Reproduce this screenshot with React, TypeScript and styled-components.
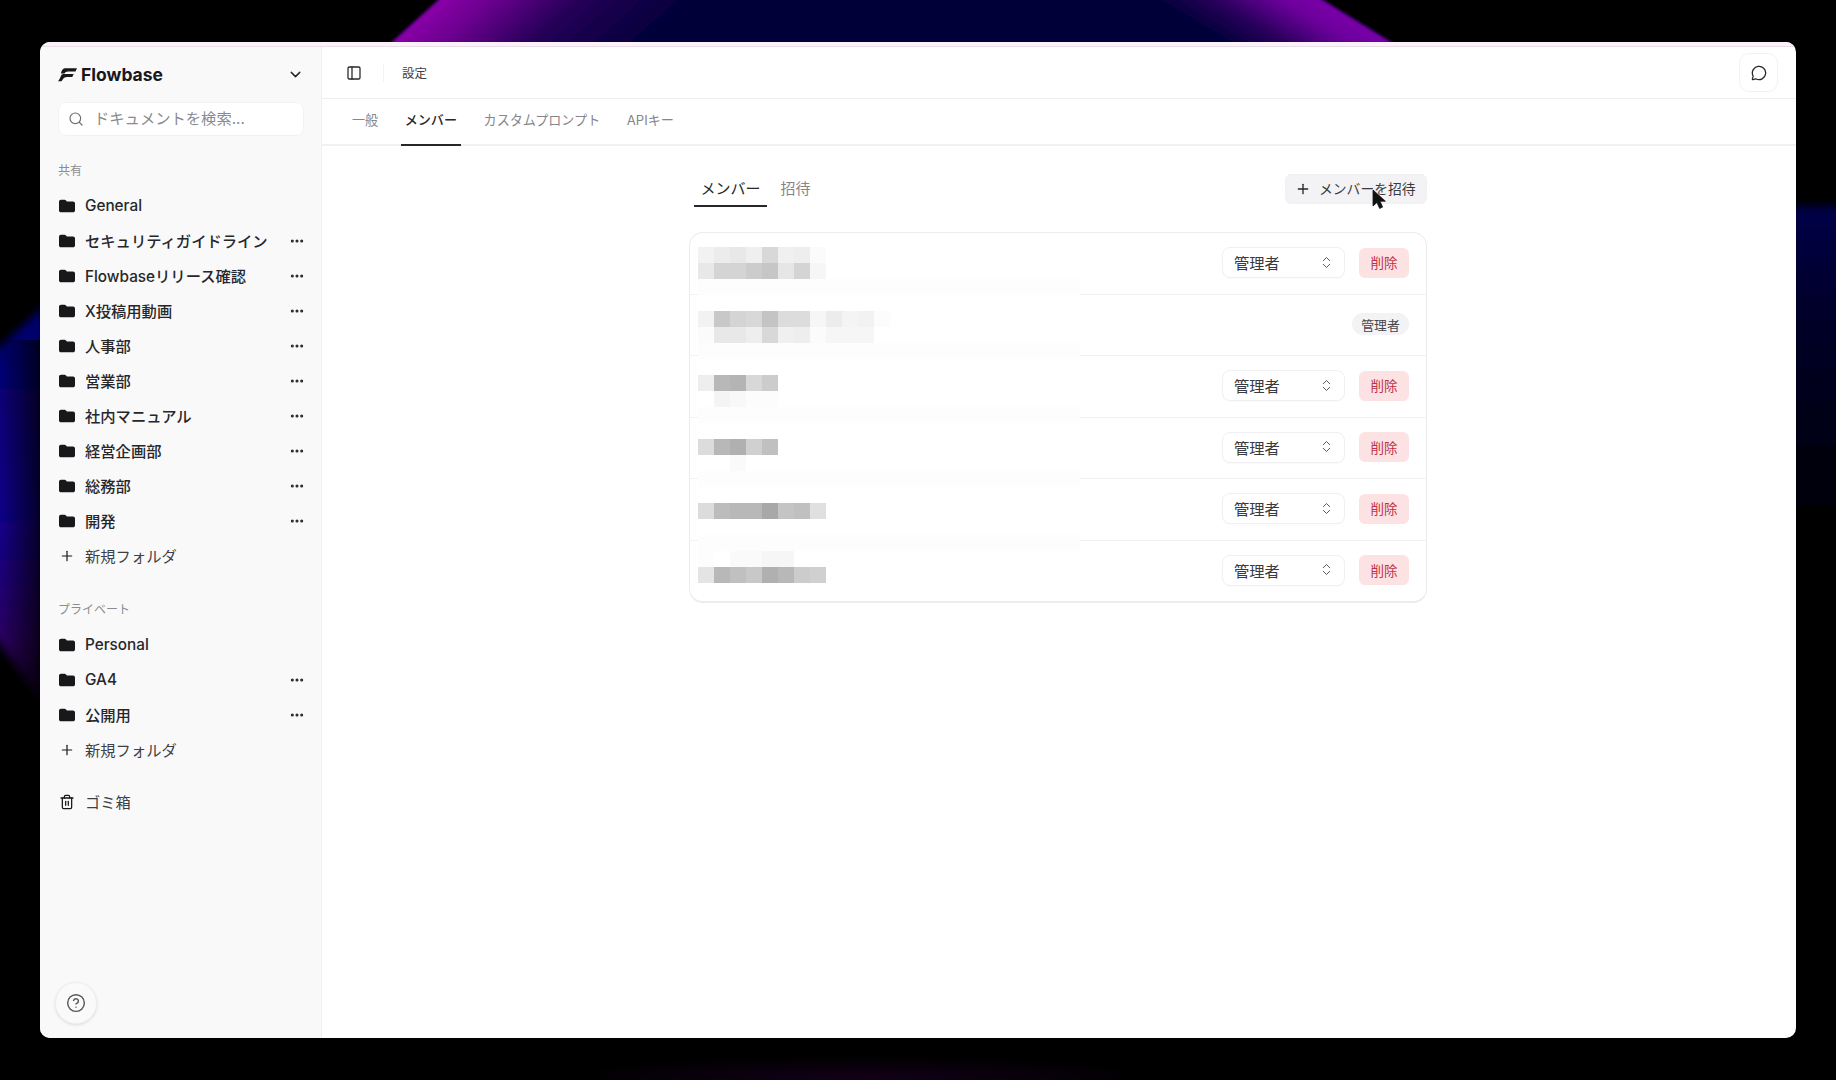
import React from "react";
import styled, { createGlobalStyle } from "styled-components";
import {
  ChevronDown,
  ChevronsUpDown,
  CircleHelp,
  Ellipsis,
  MessageCircle,
  PanelLeft,
  Plus,
  Search,
  Trash2,
} from "lucide-react";

const Global = createGlobalStyle`
  html, body { margin: 0; padding: 0; background: #000; }
  body {
    font-family: Inter, "Noto Sans CJK JP", "Noto Sans", sans-serif;
    color: #27272a;
  }
  * { box-sizing: border-box; }
`;

const Desktop = styled.div`
  position: relative;
  width: 1836px;
  height: 1080px;
  padding: 42px 40px;
  overflow: hidden;
  background: #000;
`;

const Wallpaper = styled.svg`
  position: absolute;
  inset: 0;
`;

const AppWindow = styled.div`
  position: relative;
  height: 996px;
  display: flex;
  flex-direction: column;
  border-radius: 10px;
  overflow: hidden;
  background: #fff;
`;

const TitleStrip = styled.div`
  height: 5px;
  flex: none;
  background: #fbf2f8;
  border-bottom: 1px solid #e9dee7;
`;

const Panes = styled.div`
  flex: 1;
  display: flex;
  min-height: 0;
`;

const Sidebar = styled.aside`
  width: 282px;
  flex: none;
  display: flex;
  flex-direction: column;
  padding: 0 17px 0 18px;
  background: #f9f9fa;
  border-right: 1px solid #f0f0f2;
`;

const Brand = styled.div`
  height: 55px;
  flex: none;
  display: flex;
  align-items: center;
  justify-content: space-between;
`;

const BrandMark = styled.div`
  display: flex;
  align-items: center;
  gap: 4px;
  font-size: 17.5px;
  font-weight: 700;
  color: #18181b;
`;

const SearchBox = styled.div`
  height: 34px;
  flex: none;
  display: flex;
  align-items: center;
  gap: 10px;
  padding: 0 0 4px 9px;
  background: #fff;
  border: 1px solid #f2f2f4;
  border-radius: 8px;
  font-size: 15.3px;
  color: #8a8a8e;
`;

const SearchGlyph = styled.span`
  display: flex;
  margin-top: 4px;
  color: #6f6f74;
`;

const SectionLabel = styled.div<{ $top: number }>`
  margin-top: ${(p) => p.$top}px;
  height: 16px;
  line-height: 16px;
  font-size: 12px;
  color: #8c8c90;
`;

const NavList = styled.div`
  margin-top: 9px;
  display: flex;
  flex-direction: column;
`;

const NavItem = styled.div<{ $muted?: boolean }>`
  height: 35px;
  display: flex;
  align-items: center;
  gap: 9px;
  font-size: 15.3px;
  font-weight: ${(p) => (p.$muted ? 400 : 500)};
  color: ${(p) => (p.$muted ? "#3f3f46" : "#27272a")};
`;

const NavIcon = styled.span`
  width: 18px;
  flex: none;
  display: flex;
  justify-content: center;
  color: #18181b;
`;

const NavText = styled.span<{ $latin?: boolean }>`
  flex: 1;
  white-space: nowrap;
  padding-bottom: ${(p) => (p.$latin ? 0 : 2)}px;
`;

const MoreButton = styled.span`
  display: flex;
  margin-right: -1px;
  color: #27272a;
`;

const TrashRow = styled(NavItem)`
  margin-top: 17px;
`;

const HelpButton = styled.button`
  margin: auto 0 14px -3px;
  width: 42px;
  height: 42px;
  padding: 0;
  display: flex;
  align-items: center;
  justify-content: center;
  flex: none;
  border-radius: 50%;
  border: 1px solid #f0f0f2;
  background: #fafafa;
  color: #55555a;
  box-shadow: 0 1px 3px rgba(0, 0, 0, 0.12);
`;

const Main = styled.main`
  flex: 1;
  min-width: 0;
  display: flex;
  flex-direction: column;
`;

const TopBar = styled.header`
  height: 52px;
  flex: none;
  display: flex;
  align-items: center;
  padding: 0 18px 0 24px;
  border-bottom: 1px solid #efeff1;
`;

const BarDivider = styled.span`
  width: 1px;
  height: 18px;
  margin: 0 18px 0 21px;
  background: #f3f3f5;
`;

const PageTitle = styled.span`
  flex: 1;
  font-size: 12.5px;
  color: #3f3f46;
`;

const ChatButton = styled.button`
  width: 39px;
  height: 39px;
  padding: 0;
  display: flex;
  align-items: center;
  justify-content: center;
  background: #fff;
  border: 1px solid #f2f2f4;
  border-radius: 10px;
  color: #27272a;
`;

const TabBar = styled.nav`
  height: 47px;
  flex: none;
  display: flex;
  gap: 18.5px;
  padding-left: 26px;
  border-bottom: 2px solid #f1f1f3;
`;

const Tab = styled.div<{ $active?: boolean }>`
  height: 47px;
  padding: 0 4px 5px;
  display: flex;
  align-items: center;
  font-size: 13.1px;
  font-weight: ${(p) => (p.$active ? 500 : 400)};
  color: ${(p) => (p.$active ? "#27272a" : "#85858a")};
  border-bottom: 2px solid ${(p) => (p.$active ? "#27272a" : "transparent")};
`;

const Content = styled.section`
  width: 738px;
  margin-left: 367px;
  padding-top: 28px;
`;

const MemberBar = styled.div`
  height: 33px;
  display: flex;
  align-items: flex-start;
  justify-content: space-between;
`;

const SubTabs = styled.div`
  display: flex;
  gap: 7px;
  padding-left: 5px;
`;

const SubTab = styled.div<{ $active?: boolean }>`
  height: 33px;
  padding: 0 6.5px 4px;
  display: flex;
  align-items: center;
  font-size: 15px;
  color: ${(p) => (p.$active ? "#27272a" : "#85858a")};
  border-bottom: 2px solid ${(p) => (p.$active ? "#27272a" : "transparent")};
`;

const InviteButton = styled.button`
  position: relative;
  width: 142px;
  height: 30px;
  padding: 0 0 3px 9px;
  display: flex;
  align-items: center;
  gap: 8px;
  background: #f3f3f5;
  border: 1px solid #f0f0f2;
  border-radius: 6px;
  font: inherit;
  font-size: 13.8px;
  color: #3a3a40;
`;

const PlusGlyph = styled.span`
  display: flex;
  margin-top: 3px;
  color: #27272a;
`;

const Cursor = styled.svg`
  position: absolute;
  left: 86px;
  top: 14px;
`;

const MemberCard = styled.div`
  position: relative;
  height: 371px;
  margin-top: 25px;
  display: flex;
  flex-direction: column;
  border: 1px solid #ececef;
  border-bottom-width: 2px;
  border-radius: 14px;
  background: #fff;
`;

const MemberRow = styled.div`
  flex: 1;
  display: flex;
  align-items: center;
  justify-content: flex-end;
  gap: 14px;
  padding: 0 17px 1px 0;
  border-bottom: 1px solid #f1f1f3;
  &:last-of-type { border-bottom: 0; }
`;

const RoleSelect = styled.div`
  width: 123px;
  height: 31px;
  padding: 0 10px 1px 11px;
  display: flex;
  align-items: center;
  justify-content: space-between;
  background: #fff;
  border: 1px solid #f0f0f2;
  border-radius: 8px;
  box-shadow: 0 1px 1px rgba(0, 0, 0, 0.02);
  font-size: 15.3px;
  color: #3a3a40;
`;

const DeleteButton = styled.div`
  width: 50px;
  height: 30px;
  padding-bottom: 1px;
  display: flex;
  align-items: center;
  justify-content: center;
  background: #fde2e4;
  border-radius: 6px;
  font-size: 13.5px;
  color: #bf3049;
`;

const RoleBadge = styled.div`
  width: 57px;
  height: 22px;
  display: flex;
  align-items: center;
  justify-content: center;
  background: #f3f3f5;
  border-radius: 11px;
  font-size: 12.8px;
  color: #44444a;
`;

const Mosaic = styled.svg`
  position: absolute;
  left: 8px;
  top: 14px;
  pointer-events: none;
`;

const FolderIcon = () => (
  <svg width="16" height="14" viewBox="0 0 16 14">
    <path
      d="M2 .8h3.600c.6 0 1 .2 1.400.7l.9 1.100h6.100c1.100 0 2 .9 2 2v6.800c0 1.100-.9 1.900-2 1.900H2c-1.100 0-2-.8-2-1.900V2.700C0 1.600.9.800 2 .800z"
      fill="#18181b"
    />
  </svg>
);

const Logo = () => (
  <svg width="19" height="14" viewBox="0 0 20 14">
    <path d="M7 0H20l-1.600 3.400H10.500C8.900 3.400 7.800 4.200 6.800 5.300H3C4 2.400 5 0 7 0z" fill="#18181b" />
    <path d="M5.500 6H16.500l-1.500 3H9.500C7.800 9 6.500 9.800 5.500 11C4.700 12 4.200 13 3.600 13.600H0C1 12.400 1.800 10.800 2.600 9C3.400 7.400 4 6 5.500 6z" fill="#18181b" />
  </svg>
);

const sharedFolders = [
  "セキュリティガイドライン",
  "Flowbaseリリース確認",
  "X投稿用動画",
  "人事部",
  "営業部",
  "社内マニュアル",
  "経営企画部",
  "総務部",
  "開発",
];

const privateFolders = ["GA4", "公開用"];

const Folder = ({ name, more = true }: { name: string; more?: boolean }) => (
  <NavItem>
    <NavIcon>
      <FolderIcon />
    </NavIcon>
    <NavText $latin={/^[\x00-\x7f]+$/.test(name)}>{name}</NavText>
    {more && (
      <MoreButton>
        <Ellipsis size={16} strokeWidth={2.6} />
      </MoreButton>
    )}
  </NavItem>
);

const NewFolder = () => (
  <NavItem $muted>
    <NavIcon>
      <Plus size={16} strokeWidth={1.8} />
    </NavIcon>
    <NavText>新規フォルダ</NavText>
  </NavItem>
);

// Each line: grid row (16px cells) and grey level of every cell from the left.
const mosaicRows: [number, number[]][] = [
  [0, [0xf2, 0xec, 0xe8, 0xef, 0xd8, 0xf0, 0xee, 0xfb]],
  [1, [0xe8, 0xd4, 0xd4, 0xcc, 0xc6, 0xe6, 0xd4, 0xf6]],
  [4, [0xf2, 0xc8, 0xd4, 0xd8, 0xc4, 0xdc, 0xdc, 0xf6, 0xec, 0xf4, 0xf2, 0xfc]],
  [5, [0xfb, 0xe8, 0xe8, 0xee, 0xd8, 0xf0, 0xee, 0xfb, 0xf6, 0xf6, 0xf6]],
  [8, [0xee, 0xb8, 0xb4, 0xd8, 0xcc]],
  [9, [0xff, 0xf4, 0xf8, 0xfc, 0xfc]],
  [12, [0xdc, 0xb8, 0xb0, 0xd0, 0xc0]],
  [13, [0xff, 0xff, 0xfa]],
  [16, [0xdc, 0xbc, 0xb8, 0xb8, 0xa8, 0xc4, 0xc0, 0xe0]],
  [19, [0xfd, 0xff, 0xfa, 0xfa, 0xf6, 0xf6]],
  [20, [0xe4, 0xb8, 0xc0, 0xc8, 0xb0, 0xb8, 0xcc, 0xd0]],
];

const fadedRows = [2, 6, 10, 14, 18];

const MemberMosaic = () => (
  <Mosaic width="382" height="352" viewBox="0 0 382 352" shapeRendering="crispEdges">
    {fadedRows.map((r) => (
      <rect key={r} x="0" y={r * 16} width="382" height="16" fill="#fdfdfd" />
    ))}
    {mosaicRows.map(([row, cells]) =>
      cells.map((g, i) => (
        <rect key={`${row}-${i}`} x={i * 16} y={row * 16} width="16" height="16" fill={`rgb(${g},${g},${g})`} />
      )),
    )}
  </Mosaic>
);

const Member = ({ owner }: { owner?: boolean }) => (
  <MemberRow>
    {owner ? (
      <RoleBadge>管理者</RoleBadge>
    ) : (
      <>
        <RoleSelect>
          管理者
          <ChevronsUpDown size={15} strokeWidth={1.6} color="#55555a" />
        </RoleSelect>
        <DeleteButton>削除</DeleteButton>
      </>
    )}
  </MemberRow>
);

const Backdrop = () => (
  <Wallpaper width="1836" height="1080" viewBox="0 0 1836 1080">
    <defs>
      <linearGradient id="arcLeft" x1="415" y1="21" x2="530" y2="150" gradientUnits="userSpaceOnUse">
        <stop offset="0" stopColor="#8a00a8" />
        <stop offset="0.2" stopColor="#6c0090" />
        <stop offset="0.55" stopColor="#240056" />
        <stop offset="1" stopColor="#000038" />
      </linearGradient>
      <linearGradient id="arcRight" x1="1358" y1="21" x2="1313" y2="96" gradientUnits="userSpaceOnUse">
        <stop offset="0" stopColor="#7a00a8" />
        <stop offset="0.25" stopColor="#6c009c" />
        <stop offset="0.65" stopColor="#28005a" />
        <stop offset="1" stopColor="#000038" />
      </linearGradient>
      <linearGradient id="leftGlow" x1="0" x2="0" y1="310" y2="700" gradientUnits="userSpaceOnUse">
        <stop offset="0" stopColor="#00006a" />
        <stop offset="0.55" stopColor="#12008a" />
        <stop offset="0.85" stopColor="#2c0060" />
        <stop offset="1" stopColor="#120024" />
      </linearGradient>
      <linearGradient id="leftFade" x1="0" x2="40" y1="0" y2="0" gradientUnits="userSpaceOnUse">
        <stop offset="0" stopColor="#000" stopOpacity="0" />
        <stop offset="1" stopColor="#000" stopOpacity="0.7" />
      </linearGradient>
      <linearGradient id="rightGlow" x1="0" x2="0" y1="208" y2="520" gradientUnits="userSpaceOnUse">
        <stop offset="0" stopColor="#000048" />
        <stop offset="0.3" stopColor="#00002c" />
        <stop offset="1" stopColor="#000004" />
      </linearGradient>
      <radialGradient id="floor" cx="0.5" cy="1" r="0.6">
        <stop offset="0" stopColor="#14001a" />
        <stop offset="1" stopColor="#000" />
      </radialGradient>
      <filter id="soft" x="-30%" y="-30%" width="160%" height="160%">
        <feGaussianBlur stdDeviation="4" />
      </filter>
      <filter id="softEdge" x="-5%" y="-50%" width="110%" height="200%">
        <feGaussianBlur stdDeviation="1.500" />
      </filter>
    </defs>
    <path d="M445 -6L390 44H1394L1313 -6Z" fill="#000038" filter="url(#softEdge)" />
    <path d="M445 -6L390 44H640L700 -6Z" fill="url(#arcLeft)" filter="url(#softEdge)" />
    <path d="M1313 -6L1394 44H1190L1130 -6Z" fill="url(#arcRight)" filter="url(#softEdge)" />
    <path d="M-10 356L44 306V706L-10 630Z" fill="url(#leftGlow)" filter="url(#soft)" />
    <path d="M0 340H40V720H0Z" fill="url(#leftFade)" />
    <path d="M1790 206H1846V520H1790Z" fill="url(#rightGlow)" filter="url(#soft)" />
    <rect x="600" y="1038" width="520" height="42" fill="url(#floor)" />
  </Wallpaper>
);

export default function App() {
  return (
    <>
      <Global />
      <Desktop>
        <Backdrop />
        <AppWindow>
          <TitleStrip />
          <Panes>
            <Sidebar>
              <Brand>
                <BrandMark>
                  <Logo />
                  Flowbase
                </BrandMark>
                <ChevronDown size={17} strokeWidth={2} color="#27272a" />
              </Brand>
              <SearchBox>
                <SearchGlyph>
                  <Search size={16} strokeWidth={1.8} />
                </SearchGlyph>
                ドキュメントを検索...
              </SearchBox>
              <SectionLabel $top={27}>共有</SectionLabel>
              <NavList>
                <Folder name="General" more={false} />
                {sharedFolders.map((f) => (
                  <Folder key={f} name={f} />
                ))}
                <NewFolder />
              </NavList>
              <SectionLabel $top={29}>プライベート</SectionLabel>
              <NavList>
                <Folder name="Personal" more={false} />
                {privateFolders.map((f) => (
                  <Folder key={f} name={f} />
                ))}
                <NewFolder />
              </NavList>
              <TrashRow $muted>
                <NavIcon>
                  <Trash2 size={16} strokeWidth={1.9} />
                </NavIcon>
                <NavText>ゴミ箱</NavText>
              </TrashRow>
              <HelpButton>
                <CircleHelp size={20} strokeWidth={1.7} />
              </HelpButton>
            </Sidebar>
            <Main>
              <TopBar>
                <PanelLeft size={16} strokeWidth={1.9} color="#27272a" />
                <BarDivider />
                <PageTitle>設定</PageTitle>
                <ChatButton>
                  <MessageCircle size={16} strokeWidth={1.9} />
                </ChatButton>
              </TopBar>
              <TabBar>
                <Tab>一般</Tab>
                <Tab $active>メンバー</Tab>
                <Tab>カスタムプロンプト</Tab>
                <Tab>APIキー</Tab>
              </TabBar>
              <Content>
                <MemberBar>
                  <SubTabs>
                    <SubTab $active>メンバー</SubTab>
                    <SubTab>招待</SubTab>
                  </SubTabs>
                  <InviteButton>
                    <PlusGlyph>
                      <Plus size={16} strokeWidth={2} />
                    </PlusGlyph>
                    メンバーを招待
                    <Cursor width="14" height="22" viewBox="0 0 14 22">
                      <path d="M1 1v16l4-3.600 2.600 6 3-1.300-2.600-5.900h5.400z" fill="#111" stroke="#111" strokeWidth="0.8" strokeLinejoin="round" />
                    </Cursor>
                  </InviteButton>
                </MemberBar>
                <MemberCard>
                  <Member />
                  <Member owner />
                  <Member />
                  <Member />
                  <Member />
                  <Member />
                  <MemberMosaic />
                </MemberCard>
              </Content>
            </Main>
          </Panes>
        </AppWindow>
      </Desktop>
    </>
  );
}
